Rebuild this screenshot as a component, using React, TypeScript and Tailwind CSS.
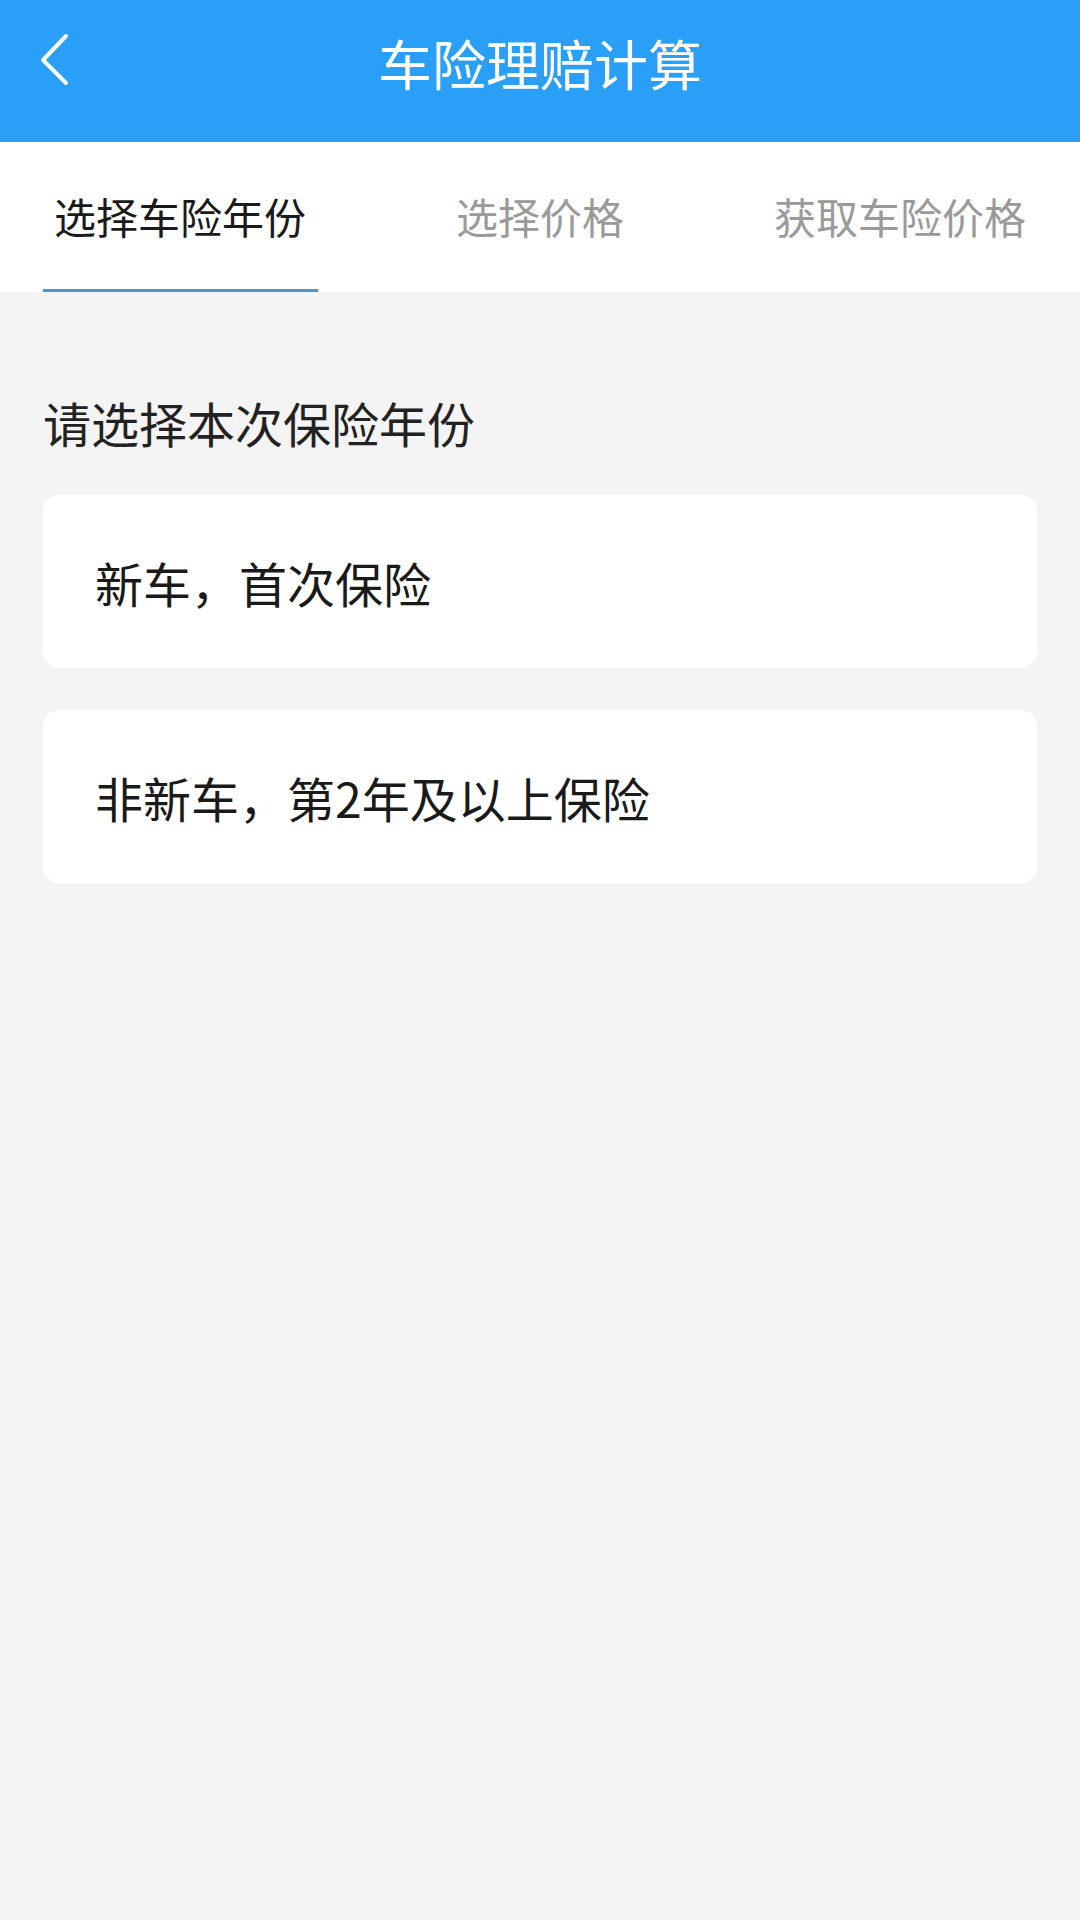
import { useState } from 'react'

const tabs = ['选择车险年份', '选择价格', '获取车险价格']
const options = ['新车，首次保险', '非新车，第2年及以上保险']

export default function App() {
    const [active, setActive] = useState(0)

    return (
        <div
            className="min-h-[1920px] w-[1080px] bg-[#f4f4f4]"
            style={{ fontFamily: '"Noto Sans CJK SC", "Noto Sans", sans-serif' }}
        >
            {/* header */}
            <header className="grid h-[142px] grid-cols-[1fr_auto_1fr] bg-[#2a9ff8]">
                <button className="ml-[38px] mt-[32px] self-start justify-self-start">
                    <svg width="32" height="56" viewBox="0 0 32 56" fill="none">
                        <path
                            d="M28 4 L5 28 L28 51"
                            stroke="white"
                            strokeWidth="4"
                            strokeLinecap="round"
                            strokeLinejoin="round"
                        />
                    </svg>
                </button>
                <h1 className="pt-[36px] text-[54px] leading-none font-normal text-white">车险理赔计算</h1>
                <div />
            </header>

            {/* tabs */}
            <nav className="grid h-[150px] grid-cols-3 bg-white">
                {tabs.map((t, i) => (
                    <button key={t} onClick={() => setActive(i)} className="flex flex-col items-center">
                        <span
                            className={
                                i === active
                                    ? 'flex flex-1 items-center text-[42px] leading-none text-[#1a1a1a]'
                                    : 'flex flex-1 items-center text-[42px] leading-none text-[#9a9a9a]'
                            }
                        >
                            {t}
                        </span>
                        <span className={i === active ? 'h-[3px] w-[275px] bg-[#4797d3]' : 'h-[3px] w-[275px]'} />
                    </button>
                ))}
            </nav>

            {/* content */}
            <main className="px-[43px] pt-[106px]">
                <p className="text-[48px] leading-none text-[#222]">请选择本次保险年份</p>
                <div className="mt-[49px] flex flex-col gap-[42px]">
                    {options.map((o) => (
                        <div
                            key={o}
                            className="flex h-[173px] items-center rounded-[16px] bg-white pl-[52px] text-[48px] leading-none text-[#1a1a1a]"
                        >
                            {o}
                        </div>
                    ))}
                </div>
            </main>
        </div>
    )
}
